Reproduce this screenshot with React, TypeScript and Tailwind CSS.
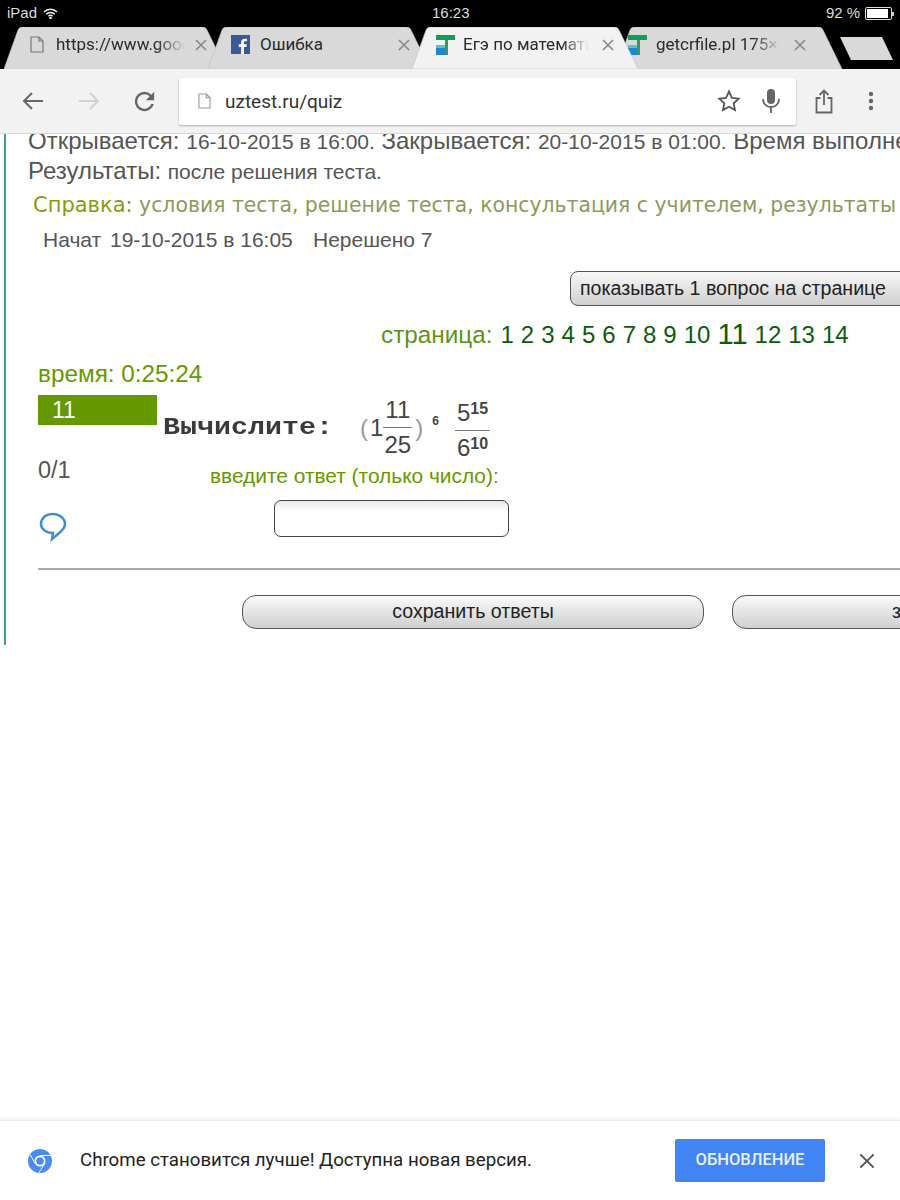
import React from "react";

const Fav = () => (
  <svg width="20" height="20" viewBox="0 0 20 20" className="shrink-0">
    <rect x="1" y="0" width="19" height="5" fill="#0f9d58" />
    <rect x="10" y="5" width="3" height="15" fill="#2f9d62" />
    <rect x="1" y="10" width="9" height="3" fill="#5fc3c0" />
    <rect x="1" y="13" width="9" height="7" fill="#1f87d0" />
  </svg>
);

const PageIcon = ({ c = "#777", w = 14, h = 17 }: { c?: string; w?: number; h?: number }) => (
  <svg width={w} height={h} viewBox="0 0 14 17" fill="none" stroke={c} strokeWidth="1.2" className="shrink-0">
    <path d="M1 1h8l4 4v11H1z" />
    <path d="M9 1v4h4" />
  </svg>
);

const X = ({ s = 12, c = "#888", w = 1.6 }: { s?: number; c?: string; w?: number }) => (
  <svg width={s} height={s} viewBox="0 0 12 12" stroke={c} strokeWidth={w} className="shrink-0">
    <path d="M1 1l10 10M11 1L1 11" />
  </svg>
);

const TabShape = ({ fill, w }: { fill: string; w: number }) => (
  <svg width={w} height="42" viewBox={`0 0 ${w} 42`} className="absolute left-0 top-0">
    <path d={`M0 42 L14 3 Q15 0 19 0 L${w - 24} 0 Q${w - 20} 0 ${w - 19} 3 L${w} 42 Z`} fill={fill} stroke="#c4c4c4" strokeWidth="0.6" />
  </svg>
);

function Tab({
  w,
  ml,
  active,
  z,
  icon,
  text,
  pl,
  textW,
  fade,
  gap,
  mr,
}: {
  w: number;
  ml: number;
  active?: boolean;
  z: string;
  icon: React.ReactNode;
  text: string;
  pl: number;
  textW: number;
  fade?: boolean;
  gap: number;
  mr: number;
}) {
  return (
    <div className={`relative h-[42px] shrink-0 ${z}`} style={{ width: w, marginLeft: ml }}>
      <TabShape fill={active ? "#f2f2f2" : "#d9d9d9"} w={w} />
      <div className="relative flex h-[35px] items-center" style={{ paddingLeft: pl }}>
        {icon}
        <div
          className="whitespace-nowrap text-[17px] text-[#2a2a2a]"
          style={{
            width: textW,
            marginLeft: gap,
            fontFamily: "Roboto, sans-serif",
            maskImage: fade ? "linear-gradient(to right, #000 78%, transparent 100%)" : undefined,
          }}
        >
          {text}
        </div>
        <div className="ml-auto" style={{ marginRight: mr }}>
          <X s={12} />
        </div>
      </div>
    </div>
  );
}

function Frac({ a, b }: { a: React.ReactNode; b: React.ReactNode }) {
  return (
    <span className="inline-flex flex-col items-center leading-none">
      <span className="border-b border-[#777] px-[2px] pb-[5px]">{a}</span>
      <span className="pt-[5px]">{b}</span>
    </span>
  );
}

export default function App() {
  return (
    <div
      className="flex h-[1200px] w-[900px] flex-col overflow-hidden bg-white"
      style={{ fontFamily: '"Liberation Sans", Arial, sans-serif' }}
    >
      {/* status bar */}
      <div className="flex h-[27px] shrink-0 items-center bg-black text-[15px] text-[#dddddd]">
        <span className="ml-[7px] w-[36px]">iPad</span>
        <svg width="15" height="11" viewBox="0 0 15 11" fill="none" stroke="#eee" strokeWidth="1.5">
          <path d="M1 4a9 9 0 0 1 13 0M3.2 6.2a6 6 0 0 1 8.6 0M5.4 8.2a3 3 0 0 1 4.2 0" />
          <circle cx="7.5" cy="10" r="0.6" fill="#eee" />
        </svg>
        <span className="ml-[374px] w-[50px]">16:23</span>
        <span className="ml-[344px] w-[39px]">92 %</span>
        <div className="flex items-center">
          <div className="h-[13px] w-[27px] rounded-[2px] border border-[#ddd] p-[1px]">
            <div className="h-full w-[90%] bg-white" />
          </div>
          <div className="h-[4px] w-[1.5px] bg-[#ccc]" />
        </div>
      </div>

      {/* tabs */}
      <div className="flex h-[42px] shrink-0 bg-black">
        <Tab w={222} ml={4} z="z-[1]" pl={26} textW={129} gap={12} mr={19} fade text="https://www.goog" icon={<PageIcon />} />
        <Tab
          w={222}
          ml={-18}
          z="z-[2]"
          pl={23}
          textW={130}
          gap={10}
          mr={20}
          text="Ошибка"
          icon={
            <svg width="19" height="19" viewBox="0 0 19 19" className="shrink-0">
              <rect width="19" height="19" fill="#3b5998" />
              <path d="M13 19v-7h2.4l.4-2.8H13V7.6c0-.8.3-1.3 1.4-1.3H16V3.8c-.3 0-1.200-.1-2.200-.1-2.200 0-3.700 1.300-3.700 3.700v1.800H7.700V12h2.400v7z" fill="#fff" />
            </svg>
          }
        />
        <Tab w={226} ml={-18} active z="z-[4]" pl={23} textW={126} gap={8} mr={24} fade text="Егэ по математи" icon={<Fav />} />
        <Tab w={226} ml={-22} z="z-[3]" pl={11} textW={124} gap={9} mr={36} fade text="getcrfile.pl 175×1" icon={<Fav />} />
        <svg width="54" height="24" viewBox="0 0 54 24" className="ml-[-2px] mt-[10px] shrink-0">
          <path d="M0 0H42L53 23H11Z" fill="#d9d9d9" />
        </svg>
      </div>

      {/* toolbar */}
      <div className="z-10 flex h-[65px] shrink-0 items-center border-b border-[#d9d9d9] bg-[#f2f2f2]">
        <svg width="22" height="20" viewBox="0 0 22 20" fill="none" stroke="#666" strokeWidth="2" className="ml-[22px]">
          <path d="M21 10H2M10 2l-8 8 8 8" />
        </svg>
        <svg width="22" height="20" viewBox="0 0 22 20" fill="none" stroke="#d2d2d2" strokeWidth="2" className="ml-[34px]">
          <path d="M1 10h19M12 2l8 8-8 8" />
        </svg>
        <svg width="29" height="29" viewBox="0 0 24 24" fill="#666" className="ml-[30px]">
          <path d="M17.650 6.350A7.960 7.960 0 0 0 12 4a8 8 0 1 0 7.730 10h-2.080A6 6 0 1 1 12 6c1.660 0 3.140.690 4.220 1.780L13 11h7V4z" />
        </svg>
        <div className="ml-[20px] flex h-[47px] w-[617px] items-center rounded-[2px] bg-white pl-[19px] shadow-[0_1px_2px_rgba(0,0,0,0.3)]">
          <PageIcon c="#999" w={13} h={16} />
          <span className="ml-[14px] mt-[3px] text-[19px] text-[#333]" style={{ fontFamily: "Roboto, sans-serif" }}>
            uztest.ru/quiz
          </span>
          <svg width="24" height="24" viewBox="0 0 24 24" fill="none" stroke="#555" strokeWidth="1.8" className="ml-auto">
            <path d="M12 2.500l2.900 6.300 6.800.8-5 4.700 1.300 6.800-6-3.400-6 3.400 1.300-6.800-5-4.700 6.800-.8z" />
          </svg>
          <svg width="20" height="26" viewBox="0 0 20 26" className="ml-[20px] mr-[15px]">
            <rect x="6" y="1" width="8" height="15" rx="4" fill="#666" />
            <path d="M2 11c0 5 3.500 8 8 8s8-3 8-8M10 19v6" fill="none" stroke="#666" strokeWidth="1.800" />
          </svg>
        </div>
        <svg width="18" height="25" viewBox="0 0 18 25" fill="none" stroke="#666" strokeWidth="1.800" className="ml-[19px]">
          <path d="M5.500 9H1.500v14.500h15V9h-4M9 16V2M4.500 6L9 1.500 13.500 6" />
        </svg>
        <svg width="6" height="20" viewBox="0 0 6 20" fill="#666" className="ml-[35px]">
          <circle cx="3" cy="3" r="2.200" />
          <circle cx="3" cy="10" r="2.200" />
          <circle cx="3" cy="17" r="2.200" />
        </svg>
      </div>

      {/* page */}
      <div className="min-h-0 flex-1 overflow-hidden">
        <div className="ml-[4px] h-[511px] overflow-hidden whitespace-nowrap border-l-2 border-[#3fa277] text-[#555]">
          <div className="mt-[-8px] pl-[22px] text-[24px] leading-[30px]">
            Открывается: <span className="text-[21px]">16-10-2015 в 16:00.</span> Закрывается:{" "}
            <span className="text-[21px]">20-10-2015 в 01:00.</span> Время выполнения
          </div>
          <div className="mt-[-1px] pl-[22px] text-[24px] leading-[30px]">
            Результаты: <span className="text-[21px]">после решения теста.</span>
          </div>
          <div className="mt-[3px] pl-[27px] text-[20.400px] leading-[30px] text-[#8d9a5b]" style={{ fontFamily: '"DejaVu Sans", sans-serif' }}>
            <span className="text-[21px] text-[#8b9a10]">Справка:</span> условия теста<span className="text-[#8b9a10]">,</span> решение теста
            <span className="text-[#8b9a10]">,</span> консультация с учителем<span className="text-[#8b9a10]">,</span> результаты
          </div>
          <div className="mt-[5px] flex pl-[37px] text-[21px] leading-[30px]">
            <span className="w-[67px]">Начат</span>
            <span className="w-[203px]">19-10-2015 в 16:05</span>
            <span>Нерешено 7</span>
          </div>

          <div className="ml-[564px] mt-[16px] flex h-[35px] w-[360px] items-center rounded-[8px] border border-[#555] bg-gradient-to-b from-[#f8f8f8] to-[#cfcfcf] pl-[9px] text-[19.600px] text-[#222]">
            показывать 1 вопрос на странице
          </div>

          <div className="ml-[375px] mt-[11px] flex h-[36px] items-center gap-[7px] text-[24px] text-[#0b5c0b]">
            <span className="mr-[1px] text-[24.300px] text-[#5f9413]">страница:</span>
            {["1", "2", "3", "4", "5", "6", "7", "8", "9", "10"].map((n) => (
              <span key={n}>{n}</span>
            ))}
            <span className="text-[29px]">11</span>
            <span>12</span>
            <span>13</span>
            <span>14</span>
          </div>

          <div className="ml-[32px] mt-[6px] h-[30px] text-[24.300px] leading-[30px] text-[#669900]">время: 0:25:24</div>

          <div className="ml-[32px] mt-[6px] flex">
            <div className="w-[119px] shrink-0">
              <div className="h-[30px] bg-[#669900] pl-[14px] text-[23px] leading-[30px] text-white">11</div>
              <div className="mt-[30px] text-[23.500px] leading-[30px]">0/1</div>
              <svg width="28" height="30" viewBox="0 0 28 30" fill="none" stroke="#3f8fd6" strokeWidth="2.500" className="ml-[1px] mt-[27px]">
                <path d="M13.500 2C20 2 26 6 26 12c0 4-3 7-7 10l-6 5 1-6C7 21 2 17 2 12 2 6 7 2 13.500 2z" />
              </svg>
            </div>
            <div className="min-w-0 flex-1">
              <div className="ml-[6px] flex h-[65px] items-center">
                <span className="mt-[1px] inline-block w-[197px] origin-left scale-x-[1.18] text-[24px] font-bold text-[#3a3a3a]" style={{ fontFamily: '"Liberation Mono", monospace' }}>
                  Вычислите:
                </span>
                <div className="flex items-center text-[24px] text-[#444]">
                  <span className="text-[#999]">(</span>
                  <span className="ml-[2px]">1</span>
                  <Frac a="11" b="25" />
                  <span className="ml-[3px] text-[#999]">)</span>
                  <span className="mb-[14px] ml-[9px] text-[12px] font-bold">6</span>
                  <span className="ml-[16px]">
                    <Frac
                      a={
                        <span>
                          5<span className="relative top-[-7px] text-[16px] font-bold">15</span>
                        </span>
                      }
                      b={
                        <span>
                          6<span className="relative top-[-7px] text-[16px] font-bold">10</span>
                        </span>
                      }
                    />
                  </span>
                </div>
              </div>
              <div className="ml-[53px] mt-[1px] text-[20.900px] leading-[30px] text-[#669900]">введите ответ (только число):</div>
              <div className="ml-[117px] mt-[9px] h-[37px] w-[235px] rounded-[7px] border border-[#444] bg-gradient-to-b from-[#e9e9e9] to-white to-[30%]" />
            </div>
          </div>

          <div className="ml-[32px] mt-[26px] h-[2px] bg-[#aaa]" />

          <div className="ml-[236px] mt-[25px] flex gap-[28px] text-[19.600px] text-[#222]">
            <div className="flex h-[34px] w-[462px] shrink-0 items-center justify-center rounded-[14px] border border-[#555] bg-gradient-to-b from-[#fafafa] to-[#cfcfcf]">
              сохранить ответы
            </div>
            <div className="flex h-[34px] w-[462px] shrink-0 items-center rounded-[14px] border border-[#555] bg-gradient-to-b from-[#fafafa] to-[#cfcfcf] pl-[159px]">
              завершить тест
            </div>
          </div>
        </div>
      </div>

      {/* update banner */}
      <div
        className="flex h-[80px] shrink-0 items-center border-t border-[#eeeeee] bg-white shadow-[0_-2px_3px_rgba(0,0,0,0.06)]"
        style={{ fontFamily: "Roboto, sans-serif" }}
      >
        <svg width="24" height="24" viewBox="0 0 24 24" fill="none" className="ml-[28px] mt-[1px]">
          <circle cx="12" cy="12" r="12" fill="#4a8af4" />
          <circle cx="12" cy="12" r="5.500" fill="#fff" />
          <circle cx="12" cy="12" r="3.800" fill="#4a8af4" />
          <path d="M12 6.500h11M7.200 14.500L2.300 6M16.800 14.500L11 23.500" stroke="#fff" strokeWidth="1" />
        </svg>
        <span className="ml-[28px] w-[595px] whitespace-nowrap text-[18.700px] text-[#222]">Chrome становится лучше! Доступна новая версия.</span>
        <div className="flex h-[43px] w-[150px] items-center justify-center rounded-[2px] bg-[#4285f4] text-[16.500px] font-medium text-[#e8f0fe]">
          ОБНОВЛЕНИЕ
        </div>
        <div className="ml-[34px]">
          <X s={16} c="#555" w={1.500} />
        </div>
      </div>
    </div>
  );
}
